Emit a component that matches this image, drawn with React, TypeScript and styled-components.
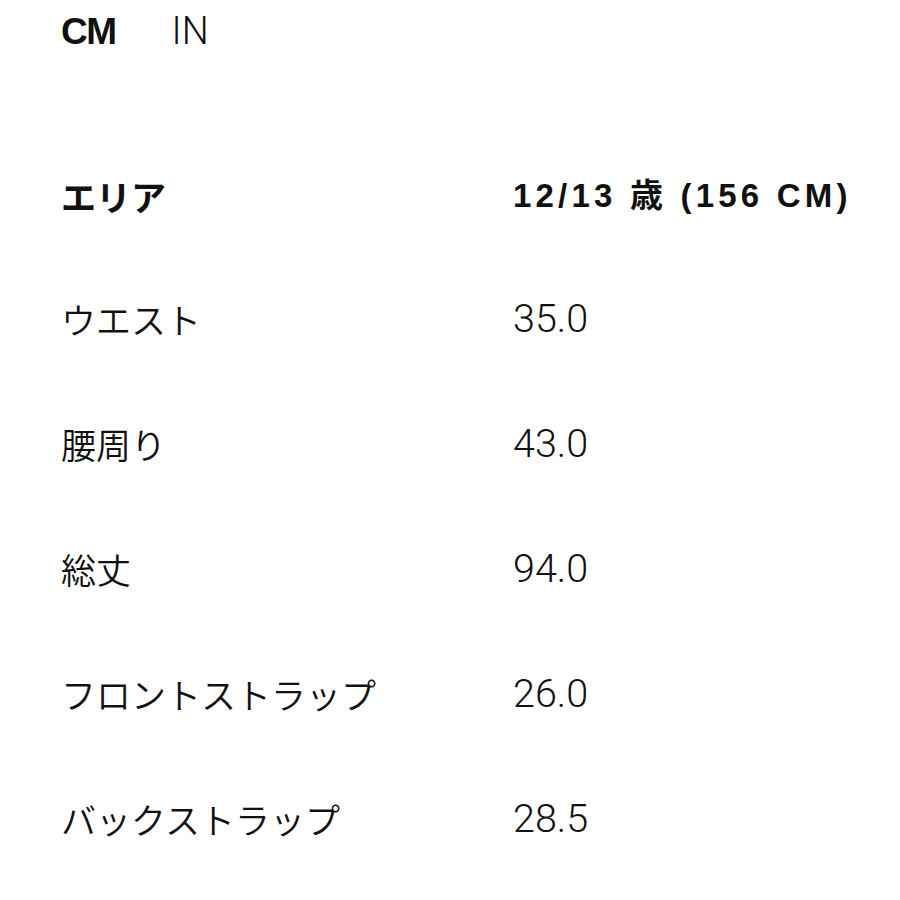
import React from "react";
import styled, { createGlobalStyle } from "styled-components";

const GlobalStyle = createGlobalStyle`
  html, body {
    margin: 0;
    padding: 0;
    background: #ffffff;
  }
  body {
    font-family: Roboto, "Noto Sans CJK JP", sans-serif;
    color: #111111;
  }
`;

const Page = styled.div`
  width: 900px;
  height: 900px;
  padding-left: 61px;
  box-sizing: border-box;
  overflow: hidden;
  background: #ffffff;
`;

const UnitBar = styled.div`
  height: 62px;
  display: flex;
  align-items: center;
  gap: 56px;
`;

const UnitTab = styled.span<{ $active?: boolean }>`
  font-family: ${(p) =>
    p.$active ? `"Liberation Sans", Arial, sans-serif` : `Roboto, sans-serif`};
  font-size: ${(p) => (p.$active ? "37px" : "38px")};
  font-weight: ${(p) => (p.$active ? 700 : 300)};
  letter-spacing: ${(p) => (p.$active ? "-1.5px" : "0")};
  color: #111111;
  line-height: 1;
`;

const SizeTable = styled.div`
  margin-top: 72px;
  display: grid;
  grid-template-columns: 452px 1fr;
  grid-template-rows: 122px;
  grid-auto-rows: 125px;
  align-items: center;
`;

const Label = styled.div<{ $head?: boolean }>`
  font-family: "Noto Sans CJK JP", sans-serif;
  font-size: 35px;
  font-weight: ${(p) => (p.$head ? 700 : 350)};
  line-height: 1;
  color: #111111;
  white-space: nowrap;
`;

const SizeHead = styled.div`
  font-family: "Liberation Sans", "Noto Sans CJK JP", sans-serif;
  font-size: 33px;
  font-weight: 700;
  letter-spacing: 4.2px;
  line-height: 1;
  color: #111111;
  white-space: nowrap;
`;

const Value = styled.div`
  font-family: Roboto, sans-serif;
  font-size: 39.5px;
  font-weight: 300;
  line-height: 1;
  color: #111111;
`;

const rows: [string, string][] = [
  ["ウエスト", "35.0"],
  ["腰周り", "43.0"],
  ["総丈", "94.0"],
  ["フロントストラップ", "26.0"],
  ["バックストラップ", "28.5"],
];

export default function App() {
  return (
    <Page>
      <GlobalStyle />
      <UnitBar>
        <UnitTab $active>CM</UnitTab>
        <UnitTab>IN</UnitTab>
      </UnitBar>
      <SizeTable>
        <Label $head>エリア</Label>
        <SizeHead>12/13 歳 (156 CM)</SizeHead>
        {rows.map(([name, value]) => (
          <React.Fragment key={name}>
            <Label>{name}</Label>
            <Value>{value}</Value>
          </React.Fragment>
        ))}
      </SizeTable>
    </Page>
  );
}
